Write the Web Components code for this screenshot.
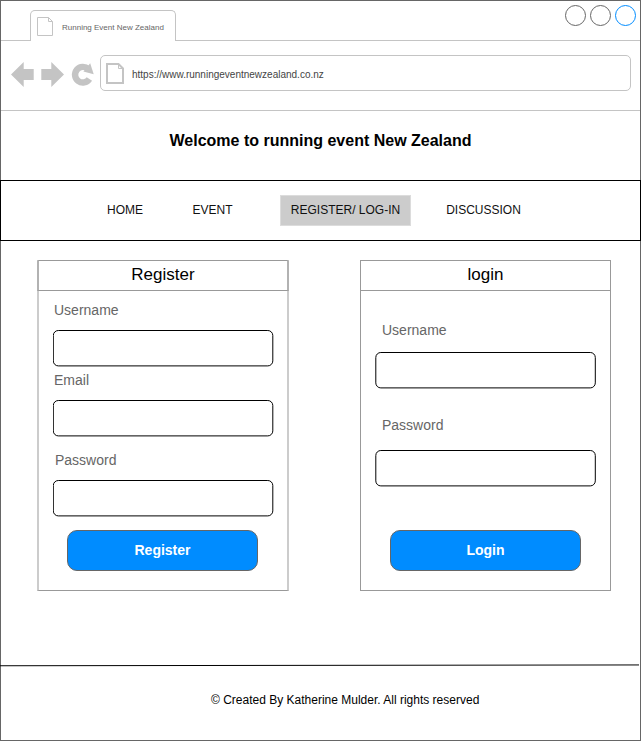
<!DOCTYPE html>
<html lang="en">
<head>
<meta charset="utf-8">
<title>Running Event New Zealand</title>
<style>
html,body{margin:0;background:#fff}
body{font-family:"Liberation Sans",Arial,sans-serif;color:#000;width:641px;height:741px;overflow:hidden}
</style>
</head>
<body>
<browser-window>
  <tab-strip slot="chrome">Running Event New Zealand</tab-strip>
  <address-bar slot="chrome">https://www.runningeventnewzealand.co.nz</address-bar>
  <page-heading>Welcome to running event New Zealand</page-heading>
  <site-nav>
    <nav-item style="width:36px;margin-left:106px">HOME</nav-item>
    <nav-item style="width:40px;margin-left:49.5px">EVENT</nav-item>
    <nav-item active style="width:131px;margin-left:47.5px">REGISTER/ LOG-IN</nav-item>
    <nav-item style="width:75px;margin-left:35px">DISCUSSION</nav-item>
  </site-nav>
  <form-row>
    <form-panel heading="Register" soft>
      <form-field label="Username" style="--gap:11px;--indent:1px"></form-field>
      <form-field label="Email" style="--gap:5px;--indent:1px"></form-field>
      <form-field label="Password" style="--gap:15px;--indent:2px"></form-field>
      <action-button slot="action">Register</action-button>
    </form-panel>
    <form-panel heading="login">
      <form-field label="Username" style="--gap:31px;--indent:7px;--space:14px"></form-field>
      <form-field label="Password" style="--gap:28px;--indent:7px;--space:17px"></form-field>
      <action-button slot="action">Login</action-button>
    </form-panel>
  </form-row>
  <site-footer>© Created By Katherine Mulder. All rights reserved</site-footer>
</browser-window>
<script>
const define = (name, html, setup) => {
  const template = document.createElement('template');
  template.innerHTML = html;
  customElements.define(name, class extends HTMLElement {
    constructor() {
      super();
      this.attachShadow({mode: 'open'}).append(template.content.cloneNode(true));
    }
    connectedCallback() { if (setup) setup(this, this.shadowRoot); }
  });
};

define('browser-window', `
<style>
:host{display:flex;flex-direction:column;box-sizing:border-box;width:641px;height:741px;border:1px solid #666;background:#fff}
</style>
<slot name="chrome"></slot><slot></slot>`);

define('tab-strip', `
<style>
:host{display:flex;justify-content:space-between;align-items:flex-end;height:40px;flex:none;box-sizing:border-box;border-bottom:1px solid #c4c4c4}
.tab{display:flex;align-items:center;box-sizing:border-box;width:146px;height:31px;margin:0 0 -1px 29px;border:1px solid #c4c4c4;border-bottom:0;border-radius:5px 5px 0 0;background:#fff;font-size:8px;line-height:10px;color:#666}
.tab svg{margin:2px 8px 0 6px}
.tab span{padding-top:4px;white-space:nowrap}
.controls{display:flex;gap:3px;align-self:flex-start;margin:3px 4px 0 0}
svg{display:block;flex:none;fill:none}
</style>
<div class="tab"><svg width="17" height="20" stroke="#c4c4c4"><path d="M.5.5H11.5L15.5 4.5V18.5H.5ZM11.5.5V4.5H15.5"/></svg><span><slot></slot></span></div>
<div class="controls">
<svg width="22" height="22" stroke="#666"><circle cx="11.5" cy="11.5" r="10"/></svg>
<svg width="22" height="22" stroke="#666"><circle cx="11.5" cy="11.5" r="10"/></svg>
<svg width="22" height="22" stroke="#008cff"><circle cx="11.5" cy="11.5" r="10"/></svg>
</div>`);

define('address-bar', `
<style>
:host{display:flex;height:70px;flex:none;box-sizing:border-box;border-bottom:1px solid #c4c4c4;padding:14px 9px 0 10px}
.controls{display:block;flex:none;width:89px;height:36px}
.url{display:flex;align-items:center;box-sizing:border-box;width:531px;height:36px;border:1px solid #c4c4c4;border-radius:5px;font-size:10px;line-height:12px;color:#444}
.page{display:block;margin:0 7px 0 5px}
.url span{padding-top:3px}
</style>
<svg class="controls" viewBox="11 55 89 36" fill="#c4c4c4">
<path d="M11 74.5L23.7 62V69H33.7V80H23.7V87Z"/>
<path d="M64 74.5L51.3 62V69H41.3V80H51.3V87Z"/>
<path d="M88.3 69.1A7.8 7.8 0 1 0 89.4 79" fill="none" stroke="#c4c4c4" stroke-width="6.4"/>
<path d="M90.2 63.3L93.7 74.2L83.4 71.5Z"/>
</svg>
<div class="url"><svg class="page" width="19" height="21" fill="none" stroke="#c4c4c4"><path stroke-width="2" d="M1 1H12.5L17 5.5V20H1Z"/><path d="M12.5 1V5.5H17"/></svg><span><slot></slot></span></div>`);

define('page-heading', `
<style>:host{display:flex;justify-content:center;flex:none;height:49px;padding-top:20px;font-size:16px;line-height:19px;font-weight:bold}</style><slot></slot>`);

define('site-nav', `
<style>:host{display:flex;align-items:center;flex:none;height:61px;box-sizing:border-box;margin:0 -1px;border:1px solid #000}</style><slot></slot>`);

define('nav-item', `
<style>
:host{display:flex;align-items:center;justify-content:center;flex:none;height:31px;padding-bottom:2px;font-size:12px;line-height:14px;white-space:nowrap;box-sizing:border-box;color:#111}
:host([active]){background:#ccc;border:1px solid #dcdcdc}
</style><slot></slot>`);

define('form-row', `
<style>:host{display:flex;flex:none;height:331px;padding:19px 29px 0 36px;justify-content:space-between}</style><slot></slot>`);

define('form-panel', `
<style>
:host{display:flex;flex-direction:column;box-sizing:border-box;width:251px;height:331px;border:1px solid #999}
:host([soft]){width:252px;border-left:2px solid #ccc;border-right:2px solid #ccc}
h2{display:flex;justify-content:center;box-sizing:border-box;height:30px;flex:none;margin:0;padding-top:4px;border-bottom:1px solid #999;font-size:17px;line-height:19px;font-weight:normal}
:host([soft]) h2{margin:0 -2px;border-left:2px solid #b2b2b2;border-right:2px solid #b2b2b2}
.fields{display:flex;flex-direction:column;flex:1;min-height:0;padding-left:14px}
.action{display:flex;justify-content:center;padding-bottom:19px}
:host([soft]) .action{padding-right:1px}
</style>
<h2></h2><div class="fields"><slot></slot></div><div class="action"><slot name="action"></slot></div>`,
(host, root) => {
  root.querySelector('h2').textContent = host.getAttribute('heading');
  host.querySelectorAll('form-field').forEach(f => f.toggleAttribute('soft', host.hasAttribute('soft')));
});

define('form-field', `
<style>
:host{display:block;flex:none;padding-top:var(--gap)}
label{display:block;font-size:14px;line-height:16px;height:16px;color:#666;margin-left:var(--indent)}
svg{display:block;margin-top:var(--space,12px);fill:#fff;stroke:#000}
rect{x:.8px}
:host([soft]) rect{x:.3px}
</style>
<label></label><svg width="222" height="37"><rect y=".5" width="219.5" height="35.4" rx="5"/></svg>`,
(host, root) => { root.querySelector('label').textContent = host.getAttribute('label'); });

define('action-button', `
<style>
button{display:block;width:191px;height:41px;box-sizing:border-box;padding:0 0 2px;border:1px solid #666;border-radius:10px;background:#008cff;color:#fff;font:bold 14px/16px "Liberation Sans",Arial,sans-serif}
</style><button><slot></slot></button>`);

define('site-footer', `
<style>
:host{display:block;flex:none;margin:73px 0 0 -1px;font-size:12px;line-height:14px}
svg{display:block;stroke:#000}
p{margin:26px 0 0 211px}
</style>
<svg width="640" height="3"><path d="M0 1.75L639 .95"/></svg><p><slot></slot></p>`);
</script>
</body>
</html>
